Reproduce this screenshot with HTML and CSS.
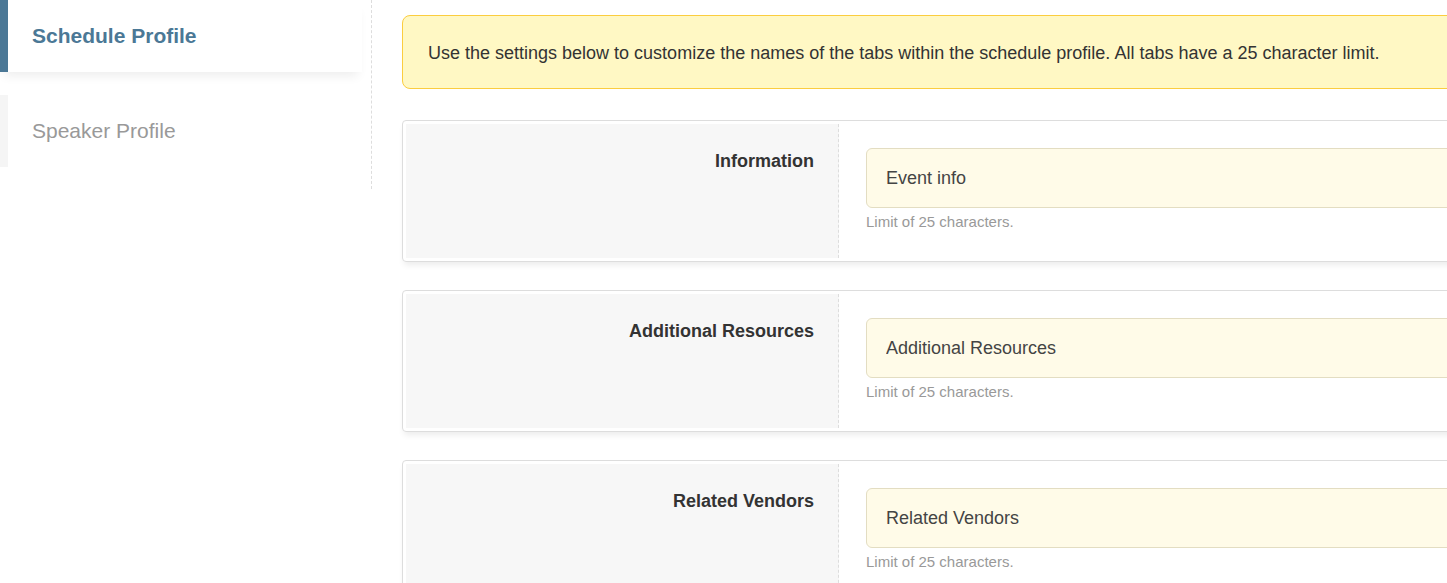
FILE: index.html
```html
<!DOCTYPE html>
<html lang="en">

<head>
	<meta charset="UTF-8">
	<meta name="viewport" content="width=device-width, initial-scale=1.0">
	<title>Profile Tabs</title>

	<link rel="stylesheet" href="styles.css">
</head>

<body>

	<nav class="side">
		<ul class="side-list">
			<li class="side-item active"><a href="#" class="side-link">Schedule Profile</a></li>
			<li class="side-item"><a href="#" class="side-link">Speaker Profile</a></li>
		</ul>
	</nav>

	<main class="main">
		<div class="notice">
			Use the settings below to customize the names of the tabs within the schedule profile. All tabs have a 25 character limit.
		</div>

		<div class="card">
			<div class="card-label">Information</div>
			<div class="card-field">
				<input type="text" class="field-input" value="Event info">
				<p class="field-help">Limit of 25 characters.</p>
			</div>
		</div>

		<div class="card">
			<div class="card-label">Additional Resources</div>
			<div class="card-field">
				<input type="text" class="field-input" value="Additional Resources">
				<p class="field-help">Limit of 25 characters.</p>
			</div>
		</div>

		<div class="card">
			<div class="card-label">Related Vendors</div>
			<div class="card-field">
				<input type="text" class="field-input" value="Related Vendors">
				<p class="field-help">Limit of 25 characters.</p>
			</div>
		</div>
	</main>

</body>

</html>
```

FILE: styles.css
```css
* {
	padding: 0;
	margin: 0;
	box-sizing: border-box;
}

ul {
	list-style: none;
}

a {
	text-decoration: none;
}

body {
	display: flex;
	align-items: flex-start;
	font-family: "Liberation Sans", Arial, sans-serif;
	color: #333;
	background: #fff;
	overflow: hidden;
}

/* left menu */

.side {
	flex: none;
	width: 372px;
	height: 189px;
	border-right: 1px dashed #ddd;
}

.side-list {
	display: flex;
	flex-direction: column;
	gap: 23px;
	width: 362px;
}

.side-item {
	height: 72px;
	border-left: 8px solid #f5f5f5;
}

.side-item.active {
	border-left-color: #4b7896;
	box-shadow: 0 8px 10px -4px rgba(0, 0, 0, 0.07);
}

.side-link {
	display: block;
	height: 100%;
	line-height: 72px;
	padding-left: 24px;
	font-size: 21px;
	color: #999;
}

.active .side-link {
	color: #4b7896;
	font-weight: bold;
}

/* content */

.main {
	flex: none;
	width: 1200px;
	padding: 15px 0 0 30px;
}

.notice {
	height: 74px;
	display: flex;
	align-items: center;
	padding: 2px 25px 0;
	background: #fff8c4;
	border: 1px solid #fbcd3f;
	border-radius: 8px;
	font-size: 18px;
	color: #333;
	margin-bottom: 31px;
	white-space: nowrap;
}

.card {
	display: flex;
	padding: 3px;
	border: 1px solid #ddd;
	border-radius: 4px;
	box-shadow: 0 5px 6px -2px rgba(0, 0, 0, 0.08);
	margin-bottom: 28px;
}

.card-label {
	flex: none;
	width: 433px;
	background: #f7f7f7;
	border-right: 1px dashed #ddd;
	padding: 27px 24px 0 0;
	text-align: right;
	font-size: 18px;
	line-height: 21px;
	font-weight: bold;
	color: #333;
}

.card-field {
	flex: 1;
	padding: 24px 0 27px 27px;
}

.field-input {
	display: block;
	width: 100%;
	height: 60px;
	padding: 0 19px;
	background: #fffbe8;
	border: 1px solid #e3ddc2;
	border-radius: 6px;
	font-family: "Liberation Sans", Arial, sans-serif;
	font-size: 18px;
	color: #444;
	outline: none;
}

.field-help {
	margin-top: 5px;
	font-size: 15px;
	line-height: 18px;
	color: #999;
}
```
